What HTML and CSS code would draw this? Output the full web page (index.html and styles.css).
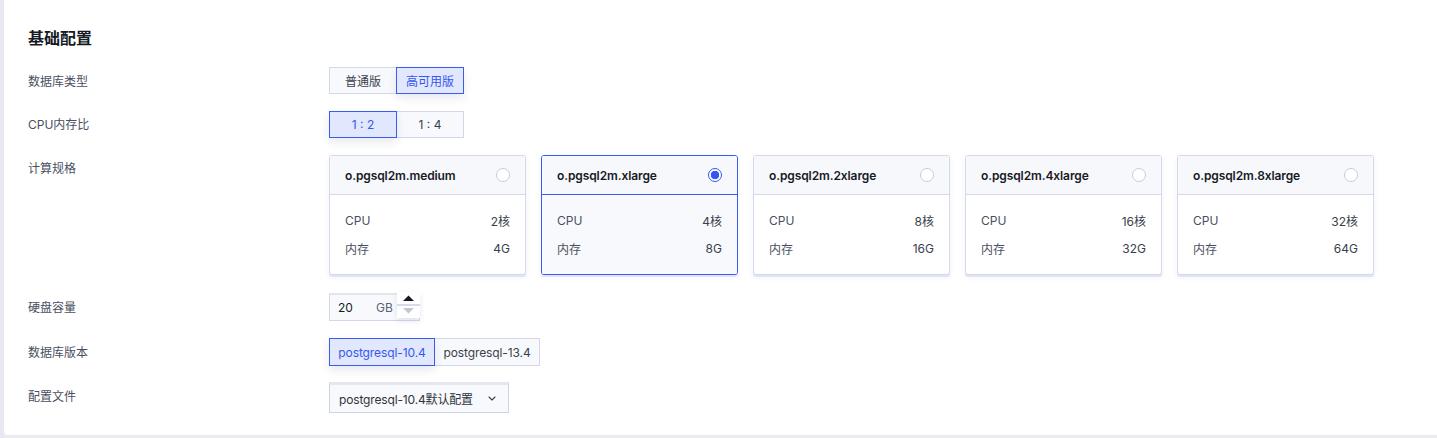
FILE: index.html
```html
<!DOCTYPE html>
<html lang="zh-CN">
<head>
<meta charset="utf-8">
<link rel="stylesheet" href="styles.css">
</head>
<body>
<div class="page">
  <section class="panel">
    <h2 class="title">基础配置</h2>
    <div class="form">
      <div class="row r-type">
        <div class="label">数据库类型</div>
        <div class="ctrl">
          <div class="seg">
            <button class="seg-btn w67">普通版</button>
            <button class="seg-btn w67 on">高可用版</button>
          </div>
        </div>
      </div>
      <div class="row r-ratio">
        <div class="label">CPU内存比</div>
        <div class="ctrl">
          <div class="seg">
            <button class="seg-btn w67 on">1 : 2</button>
            <button class="seg-btn w67">1 : 4</button>
          </div>
        </div>
      </div>
      <div class="row r-spec">
        <div class="label">计算规格</div>
        <div class="ctrl cards">
          <div class="card">
            <div class="card-head"><span>o.pgsql2m.medium</span><i class="radio"></i></div>
            <div class="card-body">
              <div class="kv"><span>CPU</span><span>2核</span></div>
              <div class="kv"><span>内存</span><span>4G</span></div>
            </div>
          </div>
          <div class="card sel">
            <div class="card-head"><span>o.pgsql2m.xlarge</span><i class="radio on"></i></div>
            <div class="card-body">
              <div class="kv"><span>CPU</span><span>4核</span></div>
              <div class="kv"><span>内存</span><span>8G</span></div>
            </div>
          </div>
          <div class="card">
            <div class="card-head"><span>o.pgsql2m.2xlarge</span><i class="radio"></i></div>
            <div class="card-body">
              <div class="kv"><span>CPU</span><span>8核</span></div>
              <div class="kv"><span>内存</span><span>16G</span></div>
            </div>
          </div>
          <div class="card">
            <div class="card-head"><span>o.pgsql2m.4xlarge</span><i class="radio"></i></div>
            <div class="card-body">
              <div class="kv"><span>CPU</span><span>16核</span></div>
              <div class="kv"><span>内存</span><span>32G</span></div>
            </div>
          </div>
          <div class="card">
            <div class="card-head"><span>o.pgsql2m.8xlarge</span><i class="radio"></i></div>
            <div class="card-body">
              <div class="kv"><span>CPU</span><span>32核</span></div>
              <div class="kv"><span>内存</span><span>64G</span></div>
            </div>
          </div>
        </div>
      </div>
      <div class="row r-disk">
        <div class="label">硬盘容量</div>
        <div class="ctrl">
          <div class="num">
            <span class="num-val">20</span>
            <span class="num-unit">GB</span>
            <span class="spin">
              <svg width="23" height="26" viewBox="0 0 23 26">
                <rect x="0" y="0" width="23" height="26" fill="#ffffff"/>
                <path d="M6 9 L11.5 3.5 L17 9 Z" fill="#161a26"/>
                <line x1="0" y1="13" x2="23" y2="13" stroke="#c9cee6" stroke-width="1.5"/>
                <path d="M6 16 L17 16 L11.5 21.5 Z" fill="#c4c6cc"/>
              </svg>
            </span>
          </div>
        </div>
      </div>
      <div class="row r-ver">
        <div class="label">数据库版本</div>
        <div class="ctrl">
          <div class="seg">
            <button class="seg-btn w105 on">postgresql-10.4</button>
            <button class="seg-btn w105">postgresql-13.4</button>
          </div>
        </div>
      </div>
      <div class="row r-conf">
        <div class="label">配置文件</div>
        <div class="ctrl">
          <div class="select">
            <span>postgresql-10.4默认配置</span>
            <svg class="chev" width="8" height="5" viewBox="0 0 8 5"><path d="M1 1 L4 4 L7 1" fill="none" stroke="#3a3f4e" stroke-width="1.1" stroke-linecap="round" stroke-linejoin="round"/></svg>
          </div>
        </div>
      </div>
    </div>
  </section>
</div>
</body>
</html>
```

FILE: styles.css
```css
* { box-sizing: border-box; }
html, body { margin: 0; padding: 0; }
body {
  background: #ececee;
  font-family: "Inter", "Noto Sans CJK SC", sans-serif;
  color: #2a2e39;
  width: 1437px;
  height: 438px;
  overflow: hidden;
}
.page {
  height: 438px;
  padding-left: 4px;
  background: linear-gradient(to right, #e7e8f1 0 4px, transparent 4px);
}
.panel {
  background: #ffffff;
  height: 435px;
  border-bottom-left-radius: 4px;
  padding: 27px 0 0 24px;
}
.title {
  margin: 0;
  font-size: 16px;
  font-weight: 700;
  line-height: 22px;
  color: #161a24;
}
.form {
  margin-top: 18px;
  display: flex;
  flex-direction: column;
}
.row {
  display: flex;
  align-items: flex-start;
}
.label {
  width: 301px;
  font-size: 12px;
  line-height: 16px;
  color: #4a4f5f;
  flex: none;
}
.ctrl { display: flex; }
.r-type { height: 44px; }
.r-type .label { margin-top: 7px; }
.r-ratio { height: 44px; }
.r-ratio .label { margin-top: 6px; }
.r-spec { height: 138px; }
.r-spec .label { margin-top: 6px; }
.r-disk { height: 45px; }
.r-disk .label { margin-top: 7px; }
.r-ver { height: 44px; }
.r-ver .label { margin-top: 7px; }
.r-conf .label { margin-top: 7px; }

.seg { display: flex; }
.seg-btn {
  height: 27px;
  border: 1px solid #d3d7ea;
  background: #f8f9fc;
  color: #3b3f4c;
  font-family: inherit;
  font-size: 12px;
  padding: 0;
  margin: 0;
  cursor: pointer;
}
.seg-btn + .seg-btn { margin-left: -1px; }
.seg-btn.on {
  position: relative;
  z-index: 1;
  border-color: #3b5cf3;
  background: #e1e7fd;
  color: #3557ef;
  box-shadow: 0 4px 10px rgba(30, 40, 90, 0.10);
}
.w67 { width: 68px; }
.w105 { width: 106px; height: 28px; letter-spacing: -0.1px; }

.cards { gap: 15px; }
.card {
  width: 197px;
  height: 120px;
  border: 1px solid #d5d9ee;
  border-radius: 3px;
  background: #ffffff;
  box-shadow: 0 2px 0 #e1e4f5, 0 2px 6px rgba(40, 50, 100, 0.06);
  overflow: hidden;
}
.card-head {
  height: 39px;
  background: #f7f8fc;
  border-bottom: 1px solid #d5d9ee;
  display: flex;
  align-items: center;
  justify-content: space-between;
  padding: 0 15px 0 15px;
  font-size: 12px;
  font-weight: 600;
  color: #161a24;
  letter-spacing: -0.1px;
}
.card-body { padding: 11px 15px 0 15px; }
.kv {
  display: flex;
  justify-content: space-between;
  height: 28px;
  align-items: center;
  font-size: 12px;
  color: #4a4f5f;
}
.kv span:last-child { color: #3a3e4b; }
.radio {
  width: 14px;
  height: 14px;
  border-radius: 50%;
  border: 1px solid #c8ccdb;
  background: #ffffff;
  display: block;
}
.radio.on {
  border-color: #3457f0;
  background: radial-gradient(circle, #3457f0 0 4px, #ffffff 4.5px);
}
.card.sel { border-color: #3b5cf3; }
.card.sel .card-head { border-bottom-color: #3b5cf3; }
.card.sel .card-body { background: #f8f9fc; height: 80px; }

.num {
  width: 91px;
  height: 28px;
  border: 1px solid #d3d7ea;
  border-top: 2px solid #e3e5ee;
  background: #f8f9fc;
  display: flex;
  align-items: center;
  font-size: 12px;
  position: relative;
}
.num-val { margin-left: 8px; width: 38px; color: #161a24; }
.num-unit { color: #5b6178; }
.spin {
  position: absolute;
  right: -1px;
  top: -3px;
  width: 23px;
  height: 26px;
  box-shadow: 0 3px 6px rgba(30, 40, 90, 0.10);
}
.spin svg { display: block; }

.select {
  width: 180px;
  height: 31px;
  border: 1px solid #cfd3e6;
  border-top: 3px solid #e5e7ef;
  background: #f8f9fc;
  display: flex;
  align-items: center;
  justify-content: space-between;
  padding: 0 12px 0 9px;
  font-size: 12px;
  color: #2f3340;
  letter-spacing: -0.15px;
}
.chev { display: block; }
```
